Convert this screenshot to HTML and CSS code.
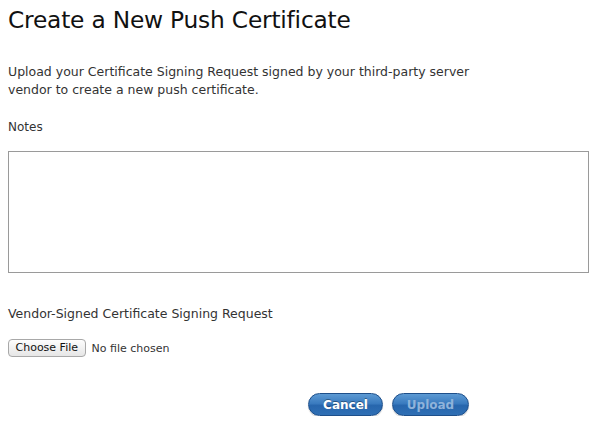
FILE: index.html
```html
<!DOCTYPE html>
<html>
<head>
<meta charset="utf-8">
<link rel="stylesheet" href="styles.css">
</head>
<body>
<div class="page">
  <h1 class="title">Create a New Push Certificate</h1>
  <p class="intro">Upload your Certificate Signing Request signed by your third-party server vendor to create a new push certificate.</p>
  <label class="label notes-label">Notes</label>
  <div class="notes"></div>
  <label class="label csr-label">Vendor-Signed Certificate Signing Request</label>
  <div class="file-row">
    <span class="file-btn">Choose File</span>
    <span class="file-status">No file chosen</span>
  </div>
  <div class="actions">
    <span class="btn">Cancel</span>
    <span class="btn btn-disabled">Upload</span>
  </div>
</div>
</body>
</html>
```
FILE: styles.css
```css
html, body {
  margin: 0;
  padding: 0;
  background: #fff;
}
body {
  font-family: "DejaVu Sans", "Lucida Grande", sans-serif;
  color: #222;
}
.page {
  padding: 0 8px;
  display: flex;
  flex-direction: column;
}
.title {
  margin: 5px 0 0 0;
  font-size: 23.3px;
  font-weight: normal;
  line-height: 30px;
  color: #111;
  letter-spacing: -0.2px;
}
.intro {
  margin: 28px 0 0 0;
  font-size: 12.5px;
  line-height: 18px;
  width: 480px;
  color: #333;
}
.label {
  font-size: 12px;
  line-height: 16px;
  color: #333;
}
.notes-label {
  margin-top: 20px;
}
.notes {
  margin-top: 16px;
  height: 120px;
  width: 579px;
  border: 1px solid #9a9a9a;
  box-sizing: content-box;
}
.csr-label {
  margin-top: 33px;
  font-size: 12.5px;
}
.file-row {
  margin-top: 17px;
  display: flex;
  align-items: center;
  gap: 6px;
  font-size: 11px;
}
.file-btn {
  display: inline-block;
  border: 1px solid #a8a8a8;
  border-radius: 4px;
  background: linear-gradient(#fdfdfd, #e6e6e6);
  padding: 1px 6.5px;
  height: 14px;
  line-height: 14px;
  color: #111;
}
.file-status {
  color: #333;
}
.actions {
  margin-top: 36px;
  display: flex;
  justify-content: flex-start;
  gap: 9px;
  padding-left: 300px;
}
.btn {
  display: inline-block;
  width: 75px;
  height: 23px;
  line-height: 22px;
  text-align: center;
  border-radius: 12px;
  background: linear-gradient(#5d9ad3 0%, #3a7bbf 45%, #2766ad 55%, #2f6fb4 100%);
  border: 1px solid #1e4f8a;
  box-sizing: border-box;
  color: #fff;
  font-size: 12px;
  font-weight: bold;
  text-shadow: 0 -1px 0 rgba(0,0,0,0.35);
  box-shadow: 0 1px 1px rgba(0,0,0,0.2);
}
.btn-disabled {
  width: 77px;
  color: #8fb3da;
  text-shadow: none;
}
```
